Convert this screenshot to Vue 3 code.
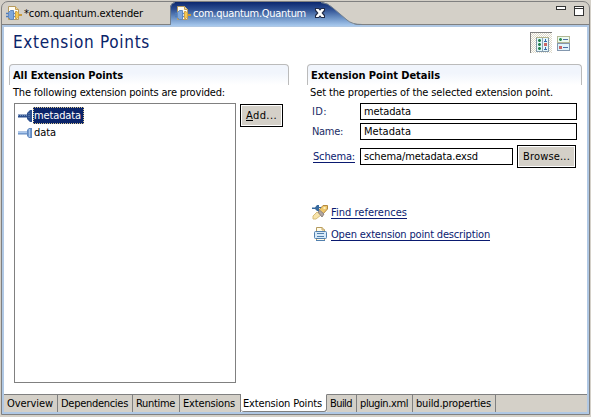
<script setup>
const pages = [
  { label: 'Overview', width: 54, fit: 46 },
  { label: 'Dependencies', width: 75, fit: 67 },
  { label: 'Runtime', width: 47, fit: 39 },
  { label: 'Extensions', width: 61, fit: 52 },
  { label: 'Extension Points', width: 86, fit: 79, active: true },
  { label: 'Build', width: 30, fit: 22 },
  { label: 'plugin.xml', width: 56, fit: 48 },
  { label: 'build.properties', width: 83, fit: 75 },
]

// Spreads or tightens the letters so that a label fills its data-fit width.
const measure = (el) => {
  const want = Number(el.dataset.fit)
  el.style.letterSpacing = '0px'
  const have = el.getBoundingClientRect().width
  el.style.letterSpacing = (want - have) / el.textContent.length + 'px'
}
const vFit = { mounted: measure }
</script>

<template>
  <div class="shell">
    <div class="editor">
      <header class="tabs">
        <div class="tab first">
          <svg class="plug" viewBox="0 0 16 16" width="16" height="16"><use href="#plug" /></svg>
          <span v-fit data-fit="119">*com.quantum.extender</span>
        </div>
        <div class="tab current">
          <svg class="tabshape" width="192" height="24" viewBox="0 0 192 24">
            <defs>
              <linearGradient id="blue" x1="0" y1="0" x2="0" y2="1">
                <stop offset="0" stop-color="#0c286f" />
                <stop offset=".3" stop-color="#2d4e91" />
                <stop offset=".65" stop-color="#698fc3" />
                <stop offset="1" stop-color="#a9caee" />
              </linearGradient>
            </defs>
            <path d="M0 24V5Q1 1 5 0H151Q158 1 163 6L177 18Q182 23 190 23V24Z" fill="url(#blue)" />
            <path d="M.5 23V5Q1 1 5 .5M151 .5Q158 1 163 6L177 18Q182 22.5 192 22.5" fill="none" stroke="#73808e" />
          </svg>
          <svg class="plug" viewBox="0 0 16 16" width="16" height="16"><use href="#plug" /></svg>
          <span v-fit data-fit="113">com.quantum.Quantum</span>
          <svg class="close" width="10" height="10" viewBox="0 0 10 10">
            <path d="M0 0H4L5 1 6 0H10V3L8 5 10 7V10H6L5 9 4 10H0V7L2 5 0 3Z" fill="#222c48" />
            <path d="M1 1H3.5L5 2.7 6.5 1H9V2L6.5 5 9 8V9H6.5L5 7.3 3.5 9H1V8L3.5 5 1 2Z" fill="#fff" />
          </svg>
        </div>
        <svg class="winbtns" width="28" height="11" viewBox="0 0 28 11" fill="#fff" stroke="#333" shape-rendering="crispEdges">
          <rect x=".5" y=".5" width="9" height="3" />
          <rect x="18.5" y=".5" width="9" height="9" /><path d="M18 2.5H28" />
        </svg>
      </header>

      <main class="page">
        <div class="heading">
          <h1><span v-fit data-fit="137">Extension Points</span></h1>
          <div class="tools">
            <div class="pressed">
              <svg width="14" height="15" viewBox="0 0 14 15" shape-rendering="crispEdges">
                <rect x=".5" y=".5" width="12" height="14" fill="#e4f7fb" stroke="#8298aa" />
                <path d="M0 .5H13" stroke="#b4b58e" /><path d="M6.5 1V14" stroke="#8fa4b4" />
                <path d="M2 2h3v3h-3zM2 6h3v3h-3zM2 10h3v3h-3z" fill="#7fbf9a" />
                <path d="M2 3h3v1h-3zM3 2h1v3h-1zM2 7h3v1h-3zM3 6h1v3h-1zM2 11h3v1h-3zM3 10h1v3h-1z" fill="#23804f" />
                <path d="M9 2h1v2h1v1h-3v-1h1zM9 10h1v2h1v1h-3v-1h1z" fill="#3568aa" />
                <path d="M8 6h3v3h-3z" fill="#cb6767" />
              </svg>
            </div>
            <svg class="layout" width="13" height="15" viewBox="0 0 13 15" shape-rendering="crispEdges">
              <rect x=".5" y=".5" width="12" height="6" fill="#eefbf2" stroke="#b3b895" />
              <rect x=".5" y="7.5" width="12" height="7" fill="#dff5fc" stroke="#8397ae" />
              <path d="M2 2h3v3h-3z" fill="#8cc9a3" />
              <path d="M2 3h3v1h-3zM3 2h1v3h-1z" fill="#318d57" />
              <path d="M2 10h3v3h-3z" fill="#cc6668" />
              <path d="M6 3.5h5M6 11.5h5" stroke="#4d6da4" />
            </svg>
          </div>
        </div>

        <div class="columns">
          <section class="left">
            <h2><span v-fit data-fit="110">All Extension Points</span></h2>
            <p><span v-fit data-fit="212">The following extension points are provided:</span></p>
            <div class="listrow">
              <ul>
                <li class="selected">
                  <svg width="15" height="12" viewBox="0 0 15 12"><path d="M0 4.5H9V3L12 0H14V12H12L9 9V7.5H0Z" fill="#2d508f" /><path d="M0 5.5H9M11 3V9" stroke="#7292bd" stroke-dasharray="1 1" /></svg>
                  <b><span v-fit data-fit="47">metadata</span></b>
                </li>
                <li>
                  <svg width="15" height="12" viewBox="0 0 15 12"><path d="M0 4.5H9V3L11 1H14V11H11L9 9V7.5H0Z" fill="#638bc2" /><path d="M0 5.5H9M11.5 2V10" stroke="#aac8ed" stroke-width="1.5" /></svg>
                  <b><span v-fit data-fit="22">data</span></b>
                </li>
              </ul>
              <button><span v-fit data-fit="31"><u>A</u>dd...</span></button>
            </div>
          </section>

          <section class="right">
            <h2><span v-fit data-fit="129">Extension Point Details</span></h2>
            <p><span v-fit data-fit="243">Set the properties of the selected extension point.</span></p>
            <div class="field">
              <label><span v-fit data-fit="15">ID:</span></label>
              <div class="input"><span v-fit data-fit="47">metadata</span></div>
            </div>
            <div class="field">
              <label><span v-fit data-fit="31">Name:</span></label>
              <div class="input"><span v-fit data-fit="47">Metadata</span></div>
            </div>
            <div class="field schema">
              <label><a v-fit data-fit="42">Schema:</a></label>
              <div class="input"><span v-fit data-fit="114">schema/metadata.exsd</span></div>
              <button><span v-fit data-fit="47">Browse...</span></button>
            </div>
            <div class="link">
              <svg width="17" height="16" viewBox="0 0 17 16">
                <path d="M1 12 5 8 9 11 4 15H1Z" fill="#f7e4ab" stroke="#d6bc7b" />
                <path d="M6 7 11 1.5H15.5V5L10 11Z" fill="#edc66c" stroke="#b58a3f" />
                <path d="M6 8 8 6.5 12 10 10 13Z" fill="#b1a6a2" stroke="#8d8583" />
                <path d="M0 3.5H3L5 1H7V7H5L3 5H0Z" fill="#386a9e" />
                <path d="M7 3.5h2" stroke="#386a9e" />
                <path d="M11.5 4h2" stroke="#fff2bb" stroke-width="2" />
              </svg>
              <a v-fit data-fit="76">Find references</a>
            </div>
            <div class="link">
              <svg width="17" height="16" viewBox="0 0 17 16">
                <path d="M4.5 6V1.5H10L12.5 4V6M4.5 11V14.5H12.5V11" fill="#fffbe8" stroke="#b59b60" />
                <path d="M10 1V4H13" fill="none" stroke="#c7a761" />
                <rect x="2.5" y="5.5" width="12" height="7" rx="1" fill="#d7eaf9" stroke="#5280ae" />
                <path d="M5 7.5H12M5 10.5H12M4 14.5H13" stroke="#5280ae" />
              </svg>
              <a v-fit data-fit="159">Open extension point description</a>
            </div>
          </section>
        </div>
      </main>

      <footer>
        <div v-for="p in pages" :key="p.label" class="pagetab" :class="{ active: p.active }" :style="{ width: p.width + 'px' }">
          <span v-fit :data-fit="p.fit">{{ p.label }}</span>
        </div>
        <div class="rest"></div>
      </footer>
    </div>

    <svg width="0" height="0" class="defs">
      <symbol id="plug" viewBox="0 0 16 16">
        <path d="M2.5 .5H9.5L12.5 3.5V13.5H2.5Z" fill="#fffdf3" stroke="#b59a60" />
        <path d="M9.5 .5V3.5H12.5" fill="#f2d795" stroke="#c2a05a" />
        <path d="M0 7.5H3M0 10.5H3" stroke="#4e7dbb" stroke-width="1.4" />
        <path d="M2.5 6.5 4.5 4.5H7.5V13.5H4.5L2.5 11.5Z" fill="#7ea7dc" stroke="#6288bd" />
        <path d="M7.5 7.5H9.5M7.5 10.5H9.5" stroke="#5f88c0" stroke-width="1.4" />
        <path d="M9.5 5.5H11L12.5 7V11L11 12.5H9.5Z" fill="#f5ca52" stroke="#d3a445" />
        <path d="M13 9H16" stroke="#c99a3b" stroke-width="2" />
      </symbol>
    </svg>
  </div>
</template>

<style>
body { margin: 0; background: #d4d0c8; overflow: hidden; }
</style>

<style scoped>
* { box-sizing: border-box; }
.shell {
  width: 591px; height: 417px; padding: 1px 1px 2px;
  background: #d4d0c8; color: #000;
  font: 11px/14px "DejaVu Sans Condensed", "DejaVu Sans", sans-serif;
  font-stretch: condensed; white-space: nowrap;
}
.defs { position: absolute; }
.editor {
  height: 414px; display: flex; flex-direction: column;
  border: 1px solid #808080; border-radius: 7px 7px 0 0; overflow: hidden;
}
.tabs { height: 23px; flex: none; display: flex; border-bottom: 1px solid #808080; }
.tab { position: relative; display: flex; align-items: center; height: 22px; }
.first { width: 168px; padding: 2px 0 0 4px; gap: 2px; }
.current { width: 192px; padding: 2px 0 0 5px; gap: 2px; color: #fff; z-index: 1; }
.current > :not(.tabshape) { position: relative; }
.tabshape { position: absolute; left: 0; top: 0; }
.plug { flex: none; margin-top: -1px; }
.close { margin-left: 7px; margin-top: -2px; }
.winbtns { margin: 4px 5px 0 auto; }
.page {
  flex: 1; min-height: 0; background: #fff; padding: 5px 5px 0;
  border: solid #b0c8e4; border-width: 2px 2px 0;
}
.heading { height: 32px; display: flex; justify-content: space-between; }
h1 { margin: 0; padding: 0 0 0 4px; font-size: 17px; line-height: 21px; font-weight: 400; color: #0a246a; }
.tools { display: flex; padding-right: 12px; gap: 5px; }
.pressed {
  width: 22px; height: 21px; padding: 4px 0 0 5px;
  border: solid #808080; border-width: 1px 0 0 1px;
  background: repeating-conic-gradient(#dcd8c8 0 25%, #fff 0 50%) 1px 1px / 2px 2px;
}
.pressed svg, .layout { display: block; }
.layout { margin-top: 4px; }
.columns { display: flex; gap: 18px; }
.left { width: 280px; }
.right { width: 275px; }
h2 {
  margin: 0; height: 21px; padding: 3px 0 0 3px; font-size: 11px; line-height: 16px; font-weight: 700;
  border: 1px solid #bbb; border-bottom: 0; border-radius: 4px 4px 0 0;
  background: linear-gradient(#f1f5fc, #f1f5fc 40%, #fff);
}
p { margin: 0; height: 18px; line-height: 16px; padding-left: 4px; }
.right p { padding-left: 3px; }
.listrow { display: flex; gap: 4px; padding-left: 5px; align-items: flex-start; }
ul { width: 222px; height: 280px; margin: 0; padding: 3px; list-style: none; border: 1px solid #808080; }
li { display: flex; align-items: center; height: 17px; }
li b { font-weight: 400; height: 17px; line-height: 17px; padding: 0 3px 0 1px; }
li b span { display: inline-block; }
.selected b { background: #0a246a; color: #fff; outline: 1px dotted #d8c58b; outline-offset: -1px; }
button {
  height: 23px; padding: 0; border: 1px solid #000; border-radius: 0; background: #d4d0c8;
  box-shadow: inset 0 0 0 1px #fff; font: inherit; color: #000; flex: none;
}
.left button { width: 43px; margin-top: 1px; line-height: 20px; }
.field { display: flex; height: 17px; margin-bottom: 3px; }
.field label { width: 53px; padding: 2px 0 0 5px; flex: none; color: #1b2c66; }
.input { flex: 1; height: 17px; margin-right: 5px; padding-left: 3px; line-height: 16px; border: 1px solid #000; }
.schema { margin-top: 8px; margin-bottom: 37px; }
.schema label { padding-left: 6px; }
.schema .input { flex: none; width: 153px; margin-right: 4px; }
.schema button { width: 59px; margin-top: -3px; line-height: 19px; }
a { color: #0a1a70; text-decoration: underline; text-underline-offset: 2px; text-decoration-skip-ink: none; }
.link { display: flex; align-items: center; gap: 2px; height: 22px; padding-left: 5px; }
.link svg { margin-top: -3px; }
.link a { display: inline-block; }
footer {
  height: 20px; flex: none; display: flex;
  border: solid #b0c8e4; border-width: 0 2px 2px; background: #fff;
}
.pagetab {
  flex: none; height: 18px; padding-left: 3px; line-height: 18px; background: #d4d0c8;
  border: solid #808080; border-width: 1px 1px 0 0;
}
.active { padding-left: 2px; background: #fff; border-top-color: #fff; border-bottom: 1px solid #808080; border-radius: 0 0 3px 3px; }
.rest { flex: 1; background: #d4d0c8; border-top: 1px solid #808080; }
</style>
